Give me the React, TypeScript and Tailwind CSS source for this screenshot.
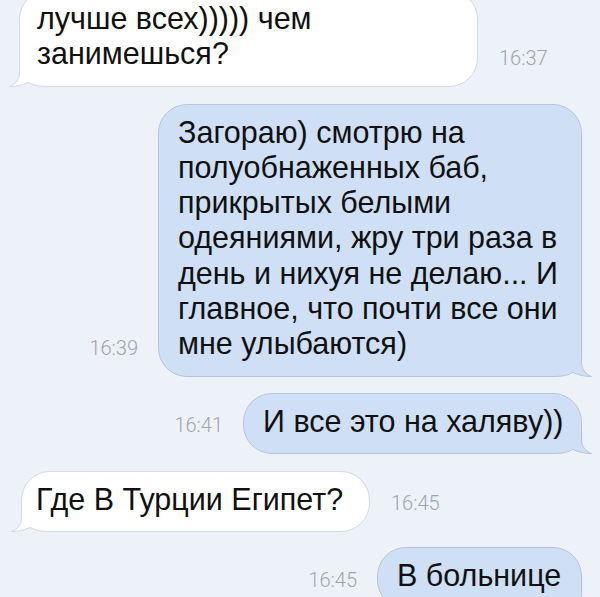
import React from "react";

const OUT_PATH =
  "M10.5,0 V16 C10.5,22.5 6,27.5 0.5,29.5 C6.5,29.8 13,28 19.5,25.5 C23.5,28 28.5,29.5 41,29.5";
const FILL_PATH =
  "M10.5,0 V16 C10.5,22.5 6,27.5 0.5,29.5 C6.5,29.8 13,28 19.5,25.5 C23.5,28 28.5,29.5 41,29.5 L41,0 Z";

function Tail({ side, fill, stroke }: { side: "left" | "right"; fill: string; stroke: string }) {
  const pos = side === "left" ? "left-[-11px]" : "right-[-11px]";
  return (
    <svg
      width="41"
      height="30"
      viewBox="0 0 41 30"
      className={`absolute bottom-[-1px] ${pos} pointer-events-none`}
    >
      <g transform={side === "right" ? "translate(41,0) scale(-1,1)" : undefined}>
        <path d={FILL_PATH} fill={fill} />
        <path d={OUT_PATH} fill="none" stroke={stroke} strokeWidth="1" />
      </g>
    </svg>
  );
}

function Incoming({
  lines,
  width,
  time,
  pad = "pl-[17px]",
  className = "",
}: {
  lines: string[];
  width: string;
  time: string;
  pad?: string;
  className?: string;
}) {
  return (
    <div className={`flex items-end ${className}`}>
      <div
        className={`relative ${width} ${pad} rounded-[29px] border border-[#d3d9e1] bg-white pr-[10px] pt-[10px] pb-[14px] text-[30.5px] leading-[35.3px] text-[#111] whitespace-nowrap`}
      >
        <Tail side="left" fill="#ffffff" stroke="#d3d9e1" />
        <div className="relative">
          {lines.map((l, i) => (
            <div key={i}>{l}</div>
          ))}
        </div>
      </div>
      <div className="ml-[21px] mb-[17px] text-[20px] leading-[24px] font-light text-[#9ea4ab] [font-family:Roboto,'Liberation_Sans',sans-serif]">
        {time}
      </div>
    </div>
  );
}

function Outgoing({
  lines,
  width,
  time,
  className = "",
}: {
  lines: string[];
  width: string;
  time: string;
  className?: string;
}) {
  return (
    <div className={`flex items-end justify-end ${className}`}>
      <div className="mr-[20px] mb-[17px] text-[20px] leading-[24px] font-light text-[#9ea4ab] [font-family:Roboto,'Liberation_Sans',sans-serif]">
        {time}
      </div>
      <div
        className={`relative ${width} rounded-[29px] border border-[#b4c6de] bg-[#cfe0f6] pl-[19px] pr-[10px] pt-[10px] pb-[14px] text-[30.5px] leading-[35.3px] text-[#111] whitespace-nowrap`}
      >
        <Tail side="right" fill="#cfe0f6" stroke="#b4c6de" />
        <div className="relative">
          {lines.map((l, i) => (
            <div key={i}>{l}</div>
          ))}
        </div>
      </div>
    </div>
  );
}

export default function App() {
  return (
    <div className="w-[600px] h-[597px] overflow-hidden bg-[#edf2f9] [font-family:'Liberation_Sans',Arial,sans-serif]">
      <div className="flex flex-col pl-[19px] pr-[18px] -mt-[10px]">
        <Incoming
          width="w-[459px]"
          lines={["лучше всех))))) чем", "занимешься?"]}
          time="16:37"
        />
        <Outgoing
          className="mt-[17px]"
          width="w-[424px]"
          lines={[
            "Загораю) смотрю на",
            "полуобнаженных баб,",
            "прикрытых белыми",
            "одеяниями, жру три раза в",
            "день и нихуя не делаю... И",
            "главное, что почти все они",
            "мне улыбаются)",
          ]}
          time="16:39"
        />
        <Outgoing
          className="mt-[16px]"
          width="w-[339px]"
          lines={["И все это на халяву))"]}
          time="16:41"
        />
        <Incoming
          className="mt-[17px] ml-[2px]"
          width="w-[349px]"
          pad="pl-[14px]"
          lines={["Где В Турции Египет?"]}
          time="16:45"
        />
        <Outgoing
          className="mt-[15px]"
          width="w-[205px]"
          lines={["В больнице"]}
          time="16:45"
        />
      </div>
    </div>
  );
}
